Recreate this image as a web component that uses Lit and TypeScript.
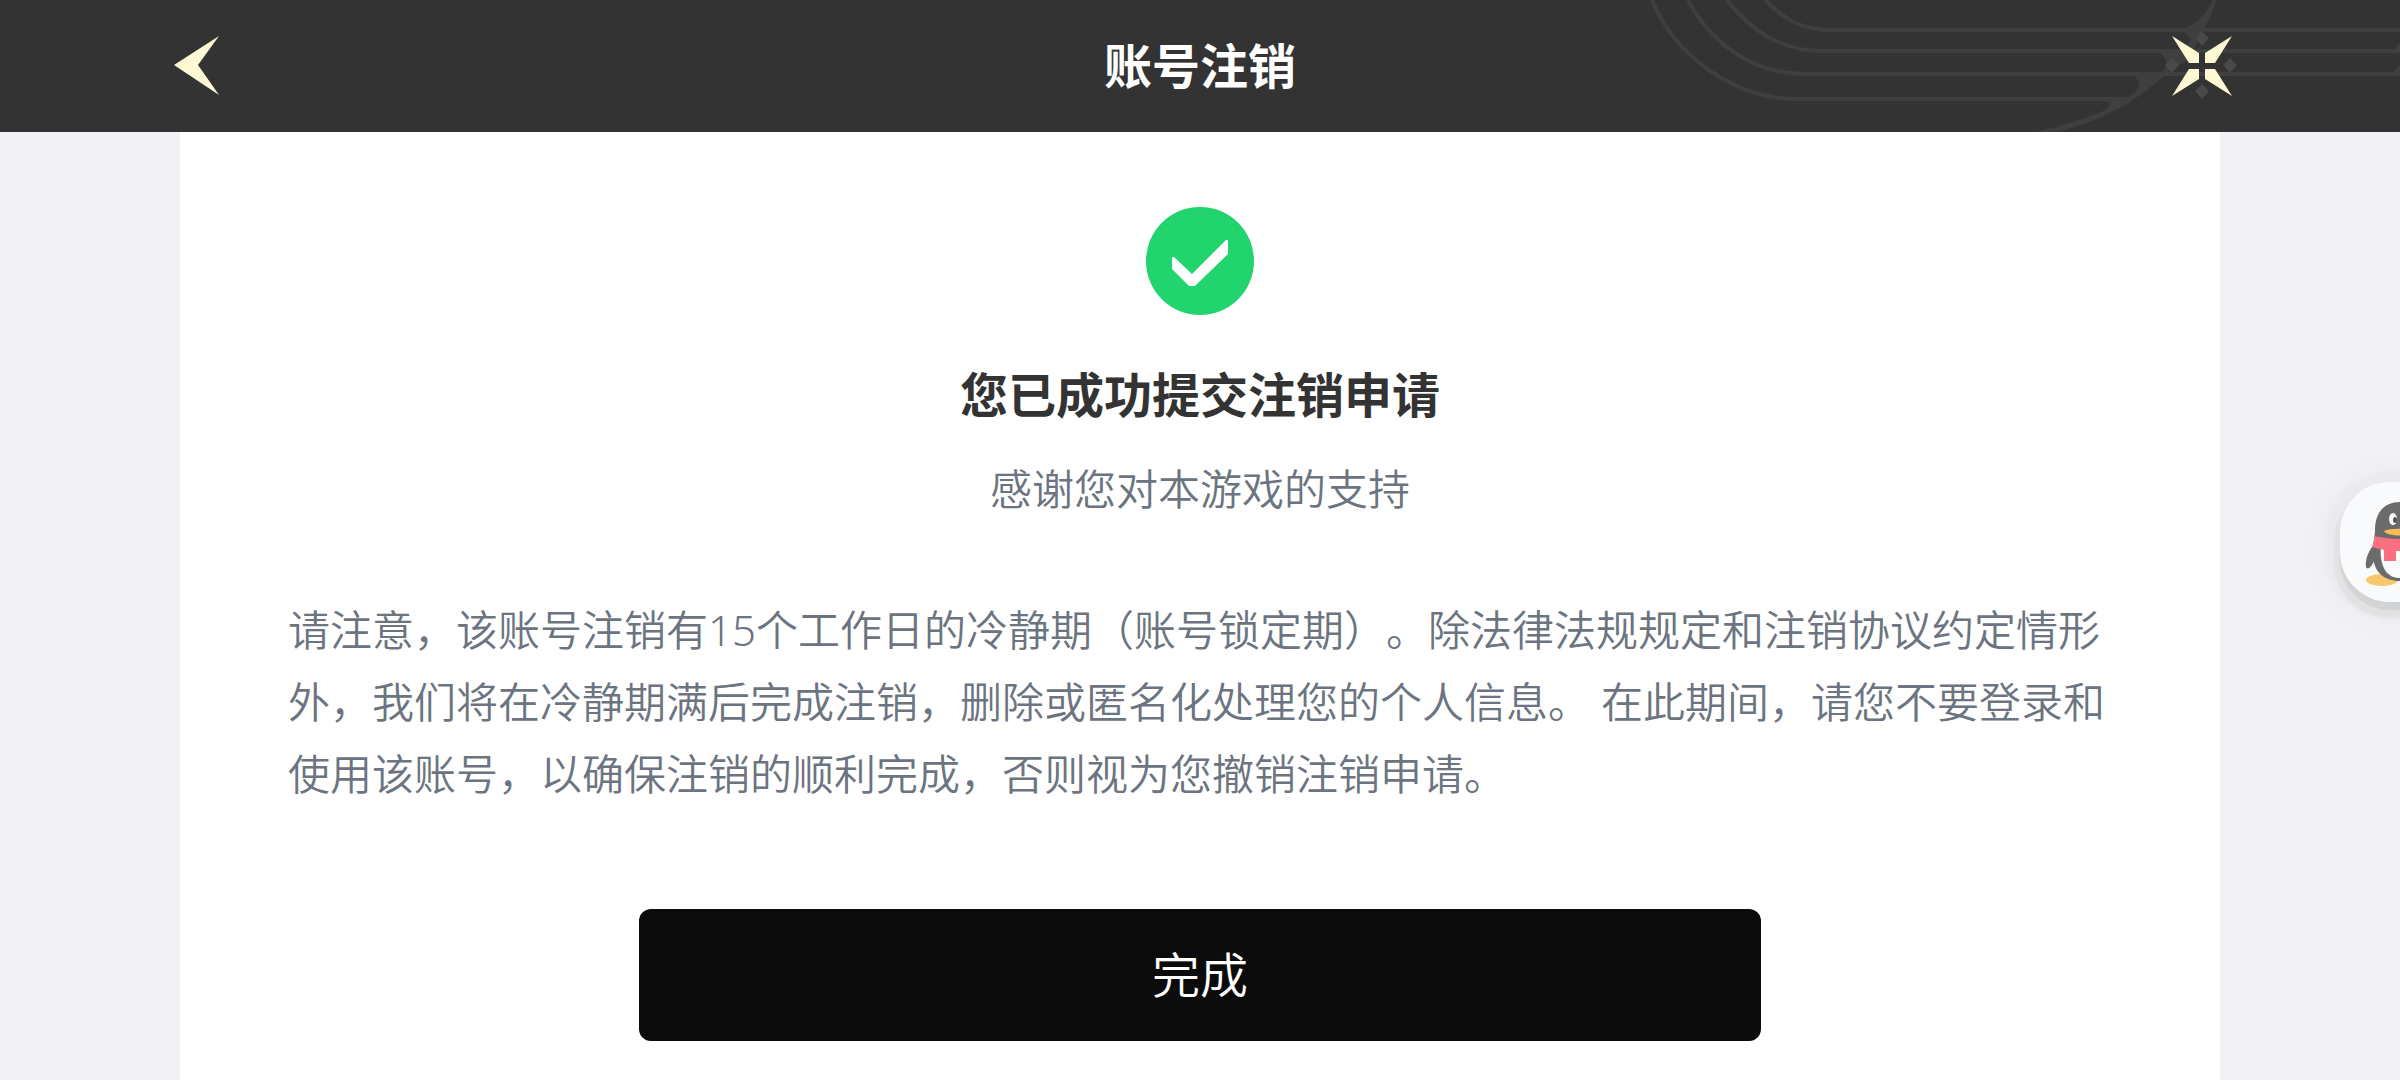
import { LitElement, html, css } from "lit";
import { customElement } from "lit/decorators.js";

@customElement("app-root")
export class AppRoot extends LitElement {
  static styles = css`
    :host {
      position: relative;
      display: flex;
      flex-direction: column;
      min-height: 100vh;
      background: #f2f1f6;
      font-family: "Noto Sans", "Noto Sans CJK SC", sans-serif;
      text-spacing-trim: space-all;
      overflow: hidden;
    }
    * {
      box-sizing: border-box;
      margin: 0;
    }
    button {
      border: 0;
      padding: 0;
      font: inherit;
      cursor: pointer;
    }
    svg {
      display: block;
    }
    .bar {
      position: relative;
      display: grid;
      grid-template-columns: 1fr auto 1fr;
      align-items: center;
      height: 132px;
      padding: 0 156px;
      background: #333333;
      color: #ffffff;
    }
    .pattern {
      position: absolute;
      top: 0;
      right: 0;
    }
    .icon-button {
      position: relative;
      width: 84px;
      height: 84px;
      background: none;
      justify-self: start;
    }
    .close {
      justify-self: end;
    }
    .heading {
      font-size: 48px;
      line-height: 72px;
      font-weight: 700;
    }
    .sheet {
      flex: 1;
      display: flex;
      flex-direction: column;
      align-items: center;
      margin: 0 180px;
      padding: 75px 0 39px;
      background: #ffffff;
    }
    .title {
      margin-top: 44px;
      font-size: 48px;
      line-height: 72px;
      font-weight: 700;
      color: #333333;
    }
    .thanks,
    .notice {
      font-size: 42px;
      line-height: 72px;
      font-weight: 350;
      color: #6b7480;
    }
    .thanks {
      margin-top: 22px;
    }
    .notice {
      align-self: stretch;
      margin-top: 69px;
      padding: 0 108px;
    }
    .done {
      width: 55%;
      height: 132px;
      margin-top: 99px;
      padding-bottom: 6px;
      border-radius: 12px;
      background: #0b0b0b;
      color: #ffffff;
      font-size: 48px;
      font-weight: 350;
    }
    .assistant {
      position: absolute;
      top: 482px;
      right: -60px;
      width: 120px;
      height: 120px;
      border-radius: 50px;
      background: #f9fafc;
      box-shadow: 0 8px 1px #d2d3d4, 0 10px 2px 6px #e2e2e4,
        0 4px 3px 14px #ebebee, 0 4px 20px 20px #eeedf1;
    }
  `;

  render() {
    return html`
      <header class="bar">
        <svg class="pattern" width="760" height="132" viewBox="1640 0 760 132" fill="none" aria-hidden="true">
          <g stroke="#3f3f3f" stroke-width="4">
            <path d="M1652 0C1674 54 1732 99 1798 99H2130" />
            <path d="M1688 0C1710 42 1752 74 1804 74H2400" />
            <path d="M1727 0C1752 32 1782 51 1822 51H2400" />
            <path d="M1765 0C1784 20 1804 30 1830 30H2400" />
          </g>
          <g fill="#3f3f3f">
            <path d="M2213 0H2216Q2212 17 2203 30L2190 58L2168 72Q2120 118 2056 132H2036Q2078 122 2105 110Q2114 104 2106 101L2128 97Q2139 92 2139 85Q2138 76 2128 73H2161Q2168 66 2166 60L2160 52H2180L2191 40L2183 29Q2202 23 2213 0Z" />
            <path d="M2393 51L2400 42V53ZM2391 74L2400 65V76Z" />
          </g>
        </svg>
        <button class="icon-button" aria-label="返回">
          <svg width="84" height="84" viewBox="156 24 84 84">
            <path d="M174 65L219 36L198 65L219 95Z" fill="#fff8d4" />
          </svg>
        </button>
        <h1 class="heading">账号注销</h1>
        <button class="icon-button close" aria-label="关闭">
          <svg width="84" height="84" viewBox="2160 24 84 84">
            <path d="M2202 31l7 7-7 8-7-8zM2202 84l7 7-7 8-7-8zM2172 58l7 7-7 8-7-8zM2230 58l7 7-7 8-7-8z" fill="#494949" />
            <path d="M2172 36L2199 53V63H2189ZM2232 36L2205 53V63H2215ZM2172 96L2199 79V69H2189ZM2232 96L2205 79V69H2215Z" fill="#fff8d4" />
          </svg>
        </button>
      </header>
      <main class="sheet">
        <svg width="108" height="108" viewBox="0 0 108 108" aria-hidden="true">
          <circle cx="54" cy="54" r="54" fill="#22d46e" />
          <path d="M26 50H28L46 67L80 33H82V47L49 79H43L26 62Z" fill="#ffffff" />
        </svg>
        <h2 class="title">您已成功提交注销申请</h2>
        <p class="thanks">感谢您对本游戏的支持</p>
        <p class="notice">请注意，该账号注销有15个工作日的冷静期（账号锁定期）。除法律法规规定和注销协议约定情形外，我们将在冷静期满后完成注销，删除或匿名化处理您的个人信息。 在此期间，请您不要登录和使用该账号，以确保注销的顺利完成，否则视为您撤销注销申请。</p>
        <button class="done">完成</button>
      </main>
      <button class="assistant" aria-label="QQ">
        <svg width="120" height="120" viewBox="0 0 120 120">
          <ellipse cx="42" cy="98" rx="16" ry="6" fill="#f8c76c" />
          <ellipse cx="78" cy="98" rx="16" ry="6" fill="#f8c76c" />
          <path d="M35 62C28 68 25 79 26 85C28 89 32 84 34 79ZM85 62C92 68 95 79 94 85C92 89 88 84 86 79Z" fill="#6b6b6b" />
          <path d="M60 20C43 20 35 32 35 48C35 54 33 60 33 72C33 90 44 99 60 99C76 99 87 90 87 72C87 60 85 54 85 48C85 32 77 20 60 20Z" fill="#6b6b6b" />
          <path d="M41 62C39 82 45 96 60 96C75 96 81 82 79 62Z" fill="#fafbfd" />
          <ellipse cx="53" cy="37" rx="4" ry="6" fill="#ffffff" />
          <ellipse cx="67" cy="37" rx="4" ry="6" fill="#ffffff" />
          <ellipse cx="55" cy="38" rx="2" ry="3" fill="#555555" />
          <ellipse cx="65" cy="38" rx="2" ry="3" fill="#555555" />
          <path d="M44 49C48 46 72 46 76 49C74 55 46 55 44 49Z" fill="#f5bd58" />
          <path d="M35 54C48 58 72 58 85 54L88 65C80 68 68 69 56 69V79H44V68L32 65Z" fill="#fc6f80" />
        </svg>
      </button>
    `;
  }
}
